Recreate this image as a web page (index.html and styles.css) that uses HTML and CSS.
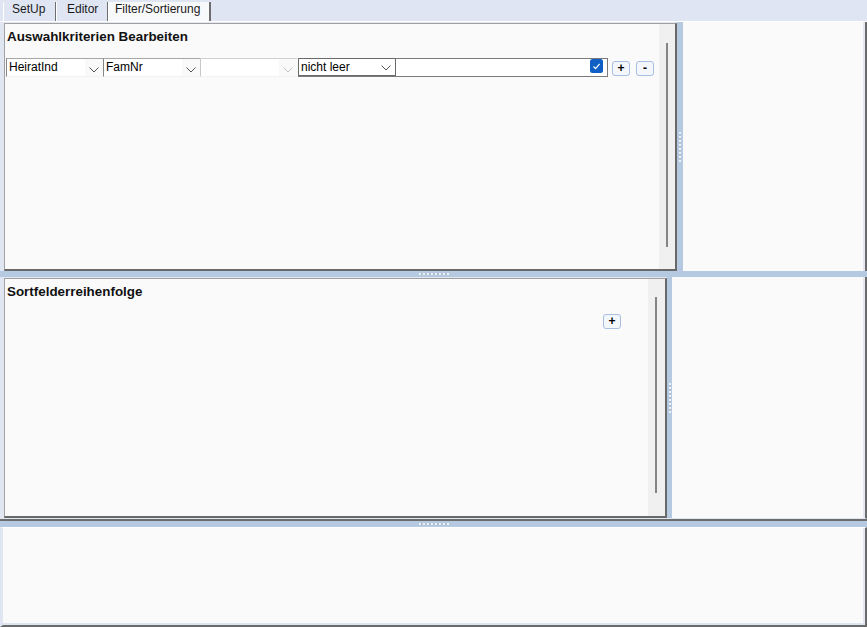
FILE: index.html
```html
<!DOCTYPE html>
<html lang="de">
<head>
<meta charset="utf-8">
<title>Filter/Sortierung</title>
<link rel="stylesheet" href="styles.css">
</head>
<body>
<div class="tabs">
  <div class="tab tab-setup">SetUp</div>
  <div class="tab tab-editor">Editor</div>
  <div class="tab tab-filter active">Filter/Sortierung</div>
</div>
<div class="app">
  <div class="row row-top">
    <div class="well well-top">
      <div class="panel">
        <div class="panel-content">
          <div class="panel-title">Auswahlkriterien Bearbeiten</div>
          <div class="filter-row">
            <div class="combo">
              <span class="combo-text">HeiratInd</span>
              <svg class="chev" width="10" height="6" viewBox="0 0 10 6"><polyline points="0.5,0.5 5,5 9.5,0.5" fill="none" stroke="#555" stroke-width="1"/></svg>
            </div>
            <div class="combo">
              <span class="combo-text">FamNr</span>
              <svg class="chev" width="10" height="6" viewBox="0 0 10 6"><polyline points="0.5,0.5 5,5 9.5,0.5" fill="none" stroke="#555" stroke-width="1"/></svg>
            </div>
            <div class="combo combo-disabled">
              <span class="combo-text"></span>
              <svg class="chev" width="10" height="6" viewBox="0 0 10 6"><polyline points="0.5,0.5 5,5 9.5,0.5" fill="none" stroke="#c4c4c4" stroke-width="1"/></svg>
            </div>
            <div class="value-group">
              <div class="op-select">
                <span class="combo-text">nicht leer</span>
                <svg class="chev" width="10" height="6" viewBox="0 0 10 6"><polyline points="0.5,0.5 5,5 9.5,0.5" fill="none" stroke="#555" stroke-width="1"/></svg>
              </div>
              <div class="value-input"></div>
              <svg class="check" width="13" height="14" viewBox="0 0 13 14"><rect x="0" y="0" width="13" height="14" rx="2.5" fill="#0f5fc4"/><polyline points="3.5,7.5 5.6,9.6 9.6,4.8" fill="none" stroke="#fff" stroke-width="1.2"/></svg>
            </div>
            <div class="btn btn-first">+</div>
            <div class="btn btn-next">-</div>
          </div>
        </div>
        <div class="scrollbar sb-top"><div class="thumb thumb-top"></div></div>
      </div>
    </div>
    <div class="vsplit vsplit-top"><div class="grip-v"></div></div>
    <div class="side side-top"></div>
  </div>
  <div class="hsplit"><div class="grip-h"></div></div>
  <div class="row row-mid">
    <div class="well well-mid">
      <div class="panel">
        <div class="panel-content">
          <div class="panel-title">Sortfelderreihenfolge</div>
          <div class="sort-actions"><div class="btn">+</div></div>
        </div>
        <div class="scrollbar sb-mid"><div class="thumb thumb-mid"></div></div>
      </div>
    </div>
    <div class="vsplit vsplit-mid"><div class="grip-v"></div></div>
    <div class="side side-mid"></div>
  </div>
  <div class="hsplit"><div class="grip-h"></div></div>
  <div class="bottom"></div>
</div>
</body>
</html>
```
FILE: styles.css
```css
html, body {
  margin: 0;
  padding: 0;
}
body {
  width: 867px;
  height: 627px;
  overflow: hidden;
  background: #e1e7f2;
  font-family: "Liberation Sans", Arial, sans-serif;
  font-size: 12px;
  color: #111;
}

/* Tabs */
.tabs {
  height: 21px;
  box-sizing: border-box;
  padding: 2px 0 0 3px;
  display: flex;
  align-items: stretch;
  background: #dfe5f2;
}
.tab {
  box-sizing: border-box;
  height: 19px;
  line-height: 15px;
  border-left: 1px solid #ffffff;
  border-right: 1px solid #6e6e6e;
  color: #1a1a1a;
  white-space: nowrap;
}
.tab-setup { width: 53px; padding-left: 8px; }
.tab-editor { width: 52px; padding-left: 10px; }
.tab-filter {
  width: 103px;
  padding-left: 6px;
  border-right: 2px solid #6e6e6e;
  background: #f8f9fb;
  height: 19px;
}

/* App frame */
.app {
  height: 606px;
  box-sizing: border-box;
  border-top: 1px solid #ffffff;
  display: flex;
  flex-direction: column;
  background: #e1e7f2;
}
.row {
  display: flex;
  box-sizing: border-box;
}
.row-top { height: 249px; }
.row-mid { height: 244px; border-bottom: 2px solid #6d6d6d; }

.well {
  box-sizing: border-box;
  padding-left: 4px;
  display: flex;
}
.well-top { width: 677px; padding-top: 1px; }
.well-mid { width: 667px; padding-top: 1px; padding-bottom: 1px; }

.panel {
  flex: 1;
  display: flex;
  box-sizing: border-box;
  background: #fafafa;
  border-left: 1px solid #a0a0a0;
  border-top: 1px solid #a0a0a0;
  border-right: 2px solid #696969;
  border-bottom: 2px solid #696969;
}
.panel-content {
  flex: 1;
  min-width: 0;
}
.panel-title {
  padding: 5px 0 0 2px;
  line-height: 16px;
  font-size: 13.4px;
  font-weight: bold;
  color: #111;
  white-space: nowrap;
}

.scrollbar {
  width: 16px;
  background: #f0f0f0;
  box-sizing: border-box;
}
.sb-top { padding: 19px 0 0 7px; }
.sb-mid { width: 17px; padding: 18px 0 0 7px; }
.thumb {
  width: 2px;
  background: #858585;
}
.thumb-top { height: 204px; }
.thumb-mid { height: 196px; }

/* Filter row */
.filter-row {
  display: flex;
  align-items: flex-start;
  margin: 13px 0 0 1px;
}
.combo {
  box-sizing: border-box;
  width: 97px;
  height: 19px;
  display: flex;
  align-items: center;
  background: linear-gradient(90deg, #ffffff 0 78px, #f9f9f9 78px);
  border-left: 1px solid #868686;
  border-top: 1px solid #a6a6a6;
  border-bottom: 1px solid #f2f2f2;
}
.combo-disabled {
  border-left-color: #c8c8c8;
  border-top-color: #d0d0d0;
}
.combo-text {
  flex: 1;
  padding-left: 2px;
  line-height: 17px;
  font-size: 12px;
  color: #000;
  white-space: nowrap;
  overflow: hidden;
}
.chev {
  display: block;
  margin: 4px 4px 0 0;
  flex: none;
}
.value-group {
  box-sizing: border-box;
  width: 310px;
  height: 19px;
  margin-left: 1px;
  display: flex;
  align-items: flex-start;
  background: #ffffff;
  border: 1px solid #7a7a7a;
  border-left: 0;
}
.op-select {
  box-sizing: border-box;
  width: 98px;
  height: 18px;
  margin-top: -1px;
  display: flex;
  align-items: center;
  border: 1px solid #6a6a6a;
  background: #ffffff;
}
.op-select .combo-text { padding-left: 2px; line-height: 16px; }
.op-select .chev { margin: 2px 4px 0 0; }
.value-input { flex: 1; }
.check {
  display: block;
  margin: 0 4px 0 0;
  flex: none;
}

.btn {
  box-sizing: border-box;
  width: 18px;
  height: 15px;
  margin-top: 3px;
  border: 1px solid #a8bfe2;
  border-radius: 3px;
  background: #f3f6fb;
  font-size: 12px;
  font-weight: bold;
  line-height: 12px;
  text-align: center;
  color: #000;
}
.btn-first { margin-left: 4px; }
.btn-next { margin-left: 6px; }

.sort-actions {
  display: flex;
  justify-content: flex-end;
  padding-right: 27px;
  margin-top: 14px;
}
.sort-actions .btn { margin-top: 0; }

/* Splitters */
.vsplit {
  background: #b5c9e1;
  display: flex;
  align-items: center;
  justify-content: center;
}
.vsplit-top { width: 6px; }
.vsplit-mid { width: 5px; margin-bottom: 1px; }
.hsplit {
  height: 6px;
  background: #b5c9e1;
  display: flex;
  align-items: center;
  justify-content: center;
}
.grip-h {
  width: 30px;
  height: 2px;
  background: repeating-linear-gradient(90deg, #eef1f6 0 2px, #a9b6c8 2px 3px, transparent 3px 4px);
}
.grip-v {
  width: 2px;
  height: 30px;
  background: repeating-linear-gradient(180deg, #eef1f6 0 2px, #a9b6c8 2px 3px, transparent 3px 4px);
}

/* Side panels */
.side {
  flex: 1;
  background: #fafafa;
  box-sizing: border-box;
  border-right: 2px solid #6b6b6b;
  box-shadow: inset -2px 0 0 #e3e8f2;
}
.side-mid {
  border-bottom: 1px solid #dfe5f0;
}

/* Bottom */
.bottom {
  flex: 1;
  box-sizing: border-box;
  background: #fafafa;
  border-top: 1px solid #ffffff;
  border-left: 3px solid #dfe5f2;
  border-right: 2px solid #6b6b6b;
  border-bottom: 2px solid #6b6b6b;
  box-shadow: inset 0 -2px 0 #dfe5f0, inset -2px 0 0 #e3e8f2;
}
```
